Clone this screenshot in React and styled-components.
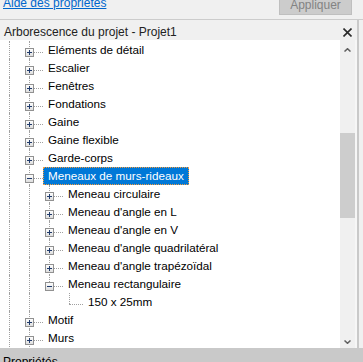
import React from "react";
import styled, { createGlobalStyle, css } from "styled-components";

const GlobalStyle = createGlobalStyle`
  html, body {
    margin: 0;
    padding: 0;
    background: #f0f0f0;
    overflow: hidden;
  }
  body {
    font-family: "Liberation Sans", Arial, sans-serif;
  }
`;

const Window = styled.div`
  width: 363px;
  height: 362px;
  display: flex;
  flex-direction: column;
  overflow: hidden;
  background: #f0f0f0;
`;

const TopBar = styled.div`
  flex: none;
  margin-top: -6px;
  height: 25px;
  border-bottom: 1px solid #cccccc;
  display: flex;
  justify-content: space-between;
  align-items: flex-start;
  padding: 0 11px 0 3px;
`;

const HelpLink = styled.a`
  margin-top: 2px;
  font-size: 12px;
  line-height: 14px;
  color: #0066cc;
  text-decoration: underline;
`;

const ApplyButton = styled.button`
  height: 21px;
  width: 73px;
  padding: 0;
  border: 1px solid #bfbfbf;
  background: #cccccc;
  color: #838383;
  font-family: inherit;
  font-size: 12px;
`;

const Main = styled.div`
  flex: 1;
  min-height: 0;
  display: flex;
`;

const Panel = styled.div`
  width: 357px;
  display: flex;
  flex-direction: column;
`;

const RightStrip = styled.div`
  flex: 1;
  border-left: 2px solid #c9c9c9;
  background: #f0f0f0;
`;

const TitleBar = styled.div`
  flex: none;
  height: 20px;
  box-sizing: border-box;
  padding: 4px 5px 0 4px;
  display: flex;
  justify-content: space-between;
  font-size: 12px;
  line-height: 16px;
  color: #222;
`;

const CloseIcon = styled.svg`
  display: block;
  margin-top: 4px;
`;

const TreeBody = styled.div`
  flex: 1;
  min-height: 0;
  display: flex;
`;

const TreeView = styled.div`
  flex: 1;
  background: #ffffff;
  overflow: hidden;
  padding-top: 1px;
`;

const Scrollbar = styled.div`
  width: 15px;
  display: flex;
  flex-direction: column;
  background: #f0f0f0;
`;

const Edge = styled.div`
  width: 2px;
  background: #f6f6f6;
`;

const ArrowButton = styled.div`
  flex: none;
  height: 17px;
  box-sizing: border-box;
  display: flex;
  justify-content: center;
  align-items: ${(p) => (p.$down ? "flex-end" : "flex-start")};
  padding: ${(p) => (p.$down ? "0 0 4px" : "8px 0 0")};
`;

const Track = styled.div`
  flex: 1;
  padding-top: 76px;
`;

const Thumb = styled.div`
  height: 85px;
  background: #cdcdcd;
`;

const BottomBar = styled.div`
  flex: none;
  height: 14px;
  box-sizing: border-box;
  background: #c9c9c9;
  padding: 7px 0 0 3px;
  font-size: 12px;
  line-height: 14px;
  color: #000;
  white-space: nowrap;
`;

const Row = styled.div`
  display: flex;
  height: 18px;
  white-space: nowrap;
`;

const dotted = "1px dotted #a0a0a0";

const Guide = styled.span`
  position: relative;
  flex: none;
  width: 20px;
  ${(p) =>
    p.$line &&
    css`
      &::before {
        content: "";
        position: absolute;
        left: 9px;
        top: 0;
        bottom: 0;
        border-left: ${dotted};
      }
    `}
`;

const Branch = styled.span`
  position: relative;
  flex: none;
  width: 23px;
  &::before {
    content: "";
    position: absolute;
    left: 9px;
    top: 0;
    height: ${(p) => (p.$last ? "11px" : "18px")};
    border-left: ${dotted};
  }
  &::after {
    content: "";
    position: absolute;
    left: 9px;
    right: 0;
    top: 11px;
    border-top: ${dotted};
  }
`;

const ToggleBox = styled.svg`
  position: relative;
  z-index: 1;
  display: block;
  margin: 7px 0 0 5px;
`;

const Label = styled.span`
  box-sizing: border-box;
  height: 18px;
  padding: 0 4px;
  border: 1px dotted transparent;
  font-size: 11.7px;
  line-height: 16px;
  color: #000;
  ${(p) =>
    p.$selected &&
    css`
      background: #0078d7;
      color: #fff;
      border-color: #f59c3c;
    `}
`;

const Toggle = ({ open }) => (
  <ToggleBox width="9" height="9" viewBox="0 0 9 9">
    <defs>
      <linearGradient id="tg" x1="0" y1="0" x2="0" y2="1">
        <stop offset="0" stopColor="#ffffff" />
        <stop offset="1" stopColor="#dcdcdc" />
      </linearGradient>
    </defs>
    <rect x="0.5" y="0.5" width="8" height="8" fill="url(#tg)" stroke="#919191" />
    <path d="M2 4.5h5" stroke="#1f3a6b" strokeWidth="1" />
    {!open && <path d="M4.5 2v5" stroke="#1f3a6b" strokeWidth="1" />}
  </ToggleBox>
);

const Chevron = ({ down }) => (
  <svg width="7" height="4" viewBox="0 0 7 4">
    <polyline
      points={down ? "0.5,0.5 3.5,3.3 6.5,0.5" : "0.5,3.5 3.5,0.7 6.5,3.5"}
      fill="none"
      stroke="#606060"
      strokeWidth="1.5"
    />
  </svg>
);

// guides: dotted line flags for ancestor columns; toggle: plus / minus / none
const nodes = [
  { label: "Eléments de détail", guides: [1], toggle: "plus" },
  { label: "Escalier", guides: [1], toggle: "plus" },
  { label: "Fenêtres", guides: [1], toggle: "plus" },
  { label: "Fondations", guides: [1], toggle: "plus" },
  { label: "Gaine", guides: [1], toggle: "plus" },
  { label: "Gaine flexible", guides: [1], toggle: "plus" },
  { label: "Garde-corps", guides: [1], toggle: "plus" },
  { label: "Meneaux de murs-rideaux", guides: [1], toggle: "minus", selected: true },
  { label: "Meneau circulaire", guides: [1, 1], toggle: "plus" },
  { label: "Meneau d'angle en L", guides: [1, 1], toggle: "plus" },
  { label: "Meneau d'angle en V", guides: [1, 1], toggle: "plus" },
  { label: "Meneau d'angle quadrilatéral", guides: [1, 1], toggle: "plus" },
  { label: "Meneau d'angle trapézoïdal", guides: [1, 1], toggle: "plus" },
  { label: "Meneau rectangulaire", guides: [1, 1], toggle: "minus", last: true },
  { label: "150 x 25mm", guides: [1, 1, 0], last: true },
  { label: "Motif", guides: [1], toggle: "plus" },
  { label: "Murs", guides: [1], toggle: "plus" },
];

const TreeRow = ({ node }) => (
  <Row>
    {node.guides.map((g, i) => (
      <Guide key={i} $line={!!g} />
    ))}
    <Branch $last={node.last}>
      {node.toggle && <Toggle open={node.toggle === "minus"} />}
    </Branch>
    <Label $selected={node.selected}>{node.label}</Label>
  </Row>
);

export default function App() {
  return (
    <Window>
      <GlobalStyle />
      <TopBar>
        <HelpLink href="#">Aide des propriétés</HelpLink>
        <ApplyButton>Appliquer</ApplyButton>
      </TopBar>
      <Main>
        <Panel>
          <TitleBar>
            <span>Arborescence du projet - Projet1</span>
            <CloseIcon width="9" height="9" viewBox="0 0 9 9">
              <path d="M0.5 0.5l8 8M8.5 0.5l-8 8" stroke="#2b2b2b" strokeWidth="1.6" />
            </CloseIcon>
          </TitleBar>
          <TreeBody>
            <TreeView>
              {nodes.map((n) => (
                <TreeRow key={n.label} node={n} />
              ))}
            </TreeView>
            <Scrollbar>
              <ArrowButton>
                <Chevron />
              </ArrowButton>
              <Track>
                <Thumb />
              </Track>
              <ArrowButton $down>
                <Chevron down />
              </ArrowButton>
            </Scrollbar>
            <Edge />
          </TreeBody>
        </Panel>
        <RightStrip />
      </Main>
      <BottomBar>Propriétés</BottomBar>
    </Window>
  );
}
